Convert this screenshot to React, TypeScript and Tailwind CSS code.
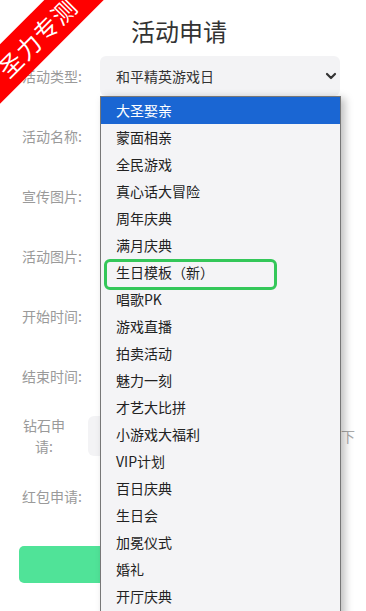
import React from "react";

const options = [
  "大圣娶亲",
  "蒙面相亲",
  "全民游戏",
  "真心话大冒险",
  "周年庆典",
  "满月庆典",
  "生日模板（新）",
  "唱歌PK",
  "游戏直播",
  "拍卖活动",
  "魅力一刻",
  "才艺大比拼",
  "小游戏大福利",
  "VIP计划",
  "百日庆典",
  "生日会",
  "加冕仪式",
  "婚礼",
  "开厅庆典",
];

const rows = ["活动名称:", "宣传图片:", "活动图片:", "开始时间:", "结束时间:"];

const App = () => {
  return (
    <div
      className="relative w-[366px] h-[611px] overflow-hidden bg-white"
      style={{ fontFamily: '"Noto Sans CJK SC", "Noto Sans", sans-serif' }}
    >
      {/* TITLE */}
      <h1 className="pt-[15px] h-[56px] text-center text-[24px] leading-[32px] text-[#333] pr-[8px]">
        活动申请
      </h1>

      {/* FORM */}
      <div className="flex flex-col gap-[20px]">
        <div className="flex items-center h-[40px] pl-[16px] pr-[26px]">
          <label className="w-[72px] text-center text-[14px] text-[#9a9a9a]">
            活动类型:
          </label>
          <div className="flex-1 ml-[12px] h-[40px] rounded-[6px] bg-[#f3f3f5] flex items-center justify-between pl-[16px] pr-[3px] text-[14px] text-[#333]">
            <span>和平精英游戏日</span>
            <svg width="12" height="12" viewBox="0 0 12 12">
              <path
                d="M2 4 L6 8 L10 4"
                fill="none"
                stroke="#333"
                strokeWidth="2.2"
                strokeLinecap="round"
                strokeLinejoin="round"
              />
            </svg>
          </div>
        </div>

        {rows.map((r) => (
          <div key={r} className="flex items-center h-[40px] pl-[16px] pr-[26px]">
            <label className="w-[72px] text-center text-[14px] text-[#9a9a9a]">
              {r}
            </label>
            <div className="flex-1 ml-[12px] h-[40px] rounded-[6px] bg-[#f3f3f5]" />
          </div>
        ))}

        <div className="flex items-center h-[40px] pl-[16px] pr-[11px]">
          <label className="w-[56px] text-center text-[14px] leading-[21px] text-[#9a9a9a]">
            钻石申请:
          </label>
          <div className="flex-1 ml-[16px] h-[40px] rounded-[6px] bg-[#f3f3f5]" />
          <span className="ml-[3px] text-[14px] text-[#aaa]">下</span>
        </div>

        <div className="flex items-center h-[40px] pl-[16px] pr-[26px]">
          <label className="w-[72px] text-center text-[14px] text-[#9a9a9a]">
            红包申请:
          </label>
          <div className="flex-1 ml-[12px] h-[40px] rounded-[6px] bg-[#f3f3f5]" />
        </div>
      </div>

      <button className="mt-[30px] ml-[19px] w-[320px] h-[37px] rounded-[5px] bg-[#50e398] text-white text-[16px]">
        提交申请
      </button>

      {/* DROPDOWN */}
      <div className="absolute left-[100px] top-[96px] w-[241px] h-[540px] bg-[#f4f4f6] border border-[#777] shadow-[4px_2px_8px_rgba(0,0,0,0.25)]">
        {options.map((o, i) => (
          <div
            key={o}
            className={
              i === 0
                ? "h-[27px] pl-[15px] flex items-center text-[14px] bg-[#1a66d3] text-white"
                : "h-[27px] pl-[15px] flex items-center text-[14px] text-[#222]"
            }
          >
            {o}
          </div>
        ))}
      </div>

      {/* HIGHLIGHT BOX */}
      <div className="absolute left-[104px] top-[259px] w-[173px] h-[31px] border-[3px] border-[#34c759] rounded-[6px]" />

      {/* RIBBON */}
      <div className="absolute left-[-63px] top-[16px] w-[200px] h-[42px] bg-[#ff0000] -rotate-45 flex items-center justify-center text-white text-[24px] leading-none tracking-[1px]">
        圣力专测
      </div>
    </div>
  );
};

export default App;
